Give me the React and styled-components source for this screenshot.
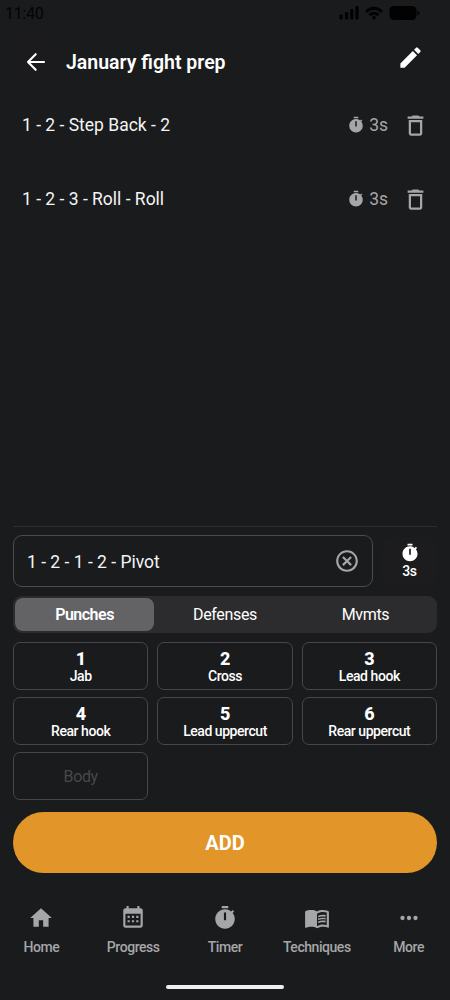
import React from 'react';
import styled, { createGlobalStyle } from 'styled-components';

const GlobalStyle = createGlobalStyle`
  * { box-sizing: border-box; }
  body { margin: 0; background: #1a1b1d; }
  button { font: inherit; color: inherit; padding: 0; border: 0; background: none; }
`;

const Screen = styled.div`
  width: 450px;
  height: 1000px;
  display: flex;
  flex-direction: column;
  overflow: hidden;
  background: #1a1b1d;
  color: #fff;
  font-family: Roboto, sans-serif;
`;

const Svg = styled.svg`
  display: block;
  flex: none;
  width: ${(p) => p.$size}px;
  height: ${(p) => p.$size}px;
  fill: currentColor;
`;

const paths = {
  edit: 'M3 17.25V21h3.75L17.81 9.94l-3.75-3.75L3 17.25zM20.71 7.04a1 1 0 0 0 0-1.41l-2.34-2.34a1 1 0 0 0-1.41 0l-1.83 1.83 3.75 3.75 1.83-1.83z',
  timer: 'M19.03 7.39L20.45 5.97C20 5.46 19.55 5 19.04 4.56L17.62 6C16.07 4.74 14.12 4 12 4C7.03 4 3 8.03 3 13S7.03 22 12 22C17 22 21 17.97 21 13C21 10.88 20.26 8.93 19.03 7.39M13 14H11V7H13V14M15 1H9V3H15V1Z',
  trash: 'M6 19c0 1.1.9 2 2 2h8c1.1 0 2-.9 2-2V7H6v12zM8 9h8v10H8V9zm7.5-5l-1-1h-5l-1 1H5v2h14V4z',
  clear: 'M12 20c-4.41 0-8-3.59-8-8s3.59-8 8-8 8 3.59 8 8-3.59 8-8 8m0-18C6.47 2 2 6.47 2 12s4.47 10 10 10 10-4.47 10-10S17.53 2 12 2m3.1 5.5L12 10.59 8.9 7.5 7.5 8.9 10.59 12 7.5 15.1 8.9 16.5 12 13.41 15.1 16.5 16.5 15.1 13.41 12 16.5 8.9z',
  home: 'M10,20V14H14V20H19V12H22L12,3L2,12H5V20H10Z',
  calendar: 'M9 10V12H7V10H9M13 10V12H11V10H13M17 10V12H15V10H17M19 3C20.11 3 21 3.9 21 5V19C21 20.1 20.11 21 19 21H5C3.89 21 3 20.1 3 19V5C3 3.9 3.9 3 5 3H6V1H8V3H16V1H18V3H19M19 19V8H5V19H19M9 14V16H7V14H9M13 14V16H11V14H13M17 14V16H15V14H17Z',
  book: 'M21 5c-1.11-.35-2.33-.5-3.5-.5-1.95 0-4.05.4-5.5 1.5-1.45-1.1-3.55-1.5-5.5-1.5S2.45 4.9 1 6v14.65c0 .25.25.5.5.5.1 0 .15-.05.25-.05C3.1 20.45 5.05 20 6.5 20c1.95 0 4.05.4 5.5 1.5 1.35-.85 3.8-1.5 5.5-1.5 1.65 0 3.35.3 4.75 1.05.1.05.15.05.25.05.25 0 .5-.25.5-.5V6c-.6-.45-1.25-.75-2-1zm0 13.5c-1.1-.35-2.3-.5-3.5-.5-1.7 0-4.15.65-5.5 1.5V8c1.35-.85 3.8-1.5 5.5-1.5 1.2 0 2.4.15 3.5.5v11.5zM17.5 10.5c.88 0 1.73.09 2.5.26V9.24c-.79-.15-1.64-.24-2.5-.24-1.7 0-3.24.29-4.5.83v1.66c1.13-.64 2.7-.99 4.5-.99zM13 12.49v1.66c1.13-.64 2.7-.99 4.5-.99.88 0 1.73.09 2.5.26V11.9c-.79-.15-1.64-.24-2.5-.24-1.7 0-3.24.3-4.5.83zM17.5 14.33c-1.7 0-3.24.29-4.5.83v1.66c1.13-.64 2.7-.99 4.5-.99.88 0 1.73.09 2.5.26v-1.52c-.79-.16-1.64-.24-2.5-.24z',
  more: 'M16,12A2,2 0 0,1 18,10A2,2 0 0,1 20,12A2,2 0 0,1 18,14A2,2 0 0,1 16,12M10,12A2,2 0 0,1 12,10A2,2 0 0,1 14,12A2,2 0 0,1 12,14A2,2 0 0,1 10,12M4,12A2,2 0 0,1 6,10A2,2 0 0,1 8,12A2,2 0 0,1 6,14A2,2 0 0,1 4,12Z',
};

const Icon = ({ name, size }) => (
  <Svg $size={size} viewBox="0 0 24 24"><path d={paths[name]} /></Svg>
);

const StatusBar = styled.div`
  height: 26px;
  flex: none;
  display: flex;
  justify-content: space-between;
  align-items: center;
  padding: 0 30px 0 5px;
  color: #040405;
  font-size: 16px;
  letter-spacing: -0.3px;
`;

const StatusIcons = styled.svg`
  width: 82px;
  height: 16px;
  fill: #020203;
`;

const Header = styled.header`
  height: 62px;
  flex: none;
  display: flex;
  align-items: center;
  padding: 9px 26px 0 12px;
`;

const BackButton = styled.button`
  width: 48px;
  height: 48px;
  border-radius: 16px;
  background: #1b1b1d;
  display: grid;
  place-items: center;
`;

const BackArrow = styled.svg`
  width: 20px;
  height: 20px;
  fill: none;
  stroke: #fff;
  stroke-width: 2.1;
  stroke-linecap: round;
  stroke-linejoin: round;
`;

const Title = styled.h1`
  margin: 0 0 0 6px;
  padding-top: 2px;
  flex: 1;
  font-size: 19.5px;
  line-height: 24px;
  font-weight: 600;
`;

const EditButton = styled.button`
  height: 36px;
  display: flex;
  align-items: flex-start;
`;

const ComboList = styled.div`
  flex: 1;
`;

const ComboRow = styled.div`
  height: 74px;
  display: flex;
  align-items: center;
  padding: 0 21px 0 22px;
  font-size: 17.5px;
  line-height: 22px;
`;

const ComboName = styled.span`
  flex: 1;
  color: #f4f4f5;
`;

const Duration = styled.span`
  display: flex;
  align-items: center;
  gap: 4px;
  margin-right: 14px;
  color: #a5a6a8;
`;

const DeleteButton = styled.button`
  color: #a5a6a8;
`;

const Editor = styled.section`
  flex: none;
  margin: 0 13px;
  padding-top: 8px;
  border-top: 1px solid #2d2d31;
`;

const EntryRow = styled.div`
  display: flex;
  align-items: center;
  gap: 9px;
`;

const Entry = styled.div`
  width: 360px;
  height: 52px;
  display: flex;
  align-items: center;
  justify-content: space-between;
  padding: 0 12px 0 13px;
  border: 1px solid #4a4a51;
  border-radius: 9px;
  font-size: 17.5px;
  line-height: 22px;
  color: #f4f4f5;
`;

const EntryText = styled.span`
  padding-top: 1px;
`;

const ClearButton = styled.button`
  color: #a5a6a8;
`;

const TimeButton = styled.button`
  flex: 1;
  height: 49px;
  display: flex;
  flex-direction: column;
  align-items: center;
  justify-content: center;
  border-radius: 9px;
  background: #1c1c1e;
  font-size: 14px;
  letter-spacing: -0.4px;
  line-height: 16px;
  font-weight: 500;
`;

const Segments = styled.div`
  height: 37px;
  margin-top: 9px;
  padding: 2px;
  display: grid;
  grid-template-columns: 139px 1fr 139px;
  border-radius: 9px;
  background: #2c2c2e;
`;

const Segment = styled.button`
  border-radius: 8px;
  background: ${(p) => (p.$active ? '#636366' : 'transparent')};
  font-size: 16px;
  letter-spacing: ${(p) => (p.$active ? '-0.5px' : '-0.35px')};
  line-height: 20px;
  font-weight: ${(p) => (p.$active ? 600 : 400)};
`;

const Pad = styled.div`
  margin-top: 9px;
  display: grid;
  grid-template-columns: repeat(3, 1fr);
  grid-auto-rows: 48px;
  gap: 7px 9px;
`;

const Key = styled.button`
  display: flex;
  flex-direction: column;
  align-items: center;
  justify-content: center;
  padding-top: 2px;
  border: 1px solid #46464b;
  border-radius: 7px;
  font-size: 14px;
  letter-spacing: -0.45px;
  line-height: 17px;
  font-weight: 500;
`;

const KeyNumber = styled.span`
  font-size: 18px;
  line-height: 19px;
  font-weight: 800;
`;

const DisabledLabel = styled.span`
  margin-top: -2px;
  font-size: 16px;
  letter-spacing: -0.4px;
  font-weight: 400;
  color: #48494b;
`;

const AddButton = styled.button`
  display: block;
  width: 100%;
  height: 61px;
  margin-top: 12px;
  border-radius: 31px;
  background: #e29528;
  font-size: 20px;
  line-height: 24px;
  font-weight: 700;
`;

const TabBar = styled.nav`
  height: 127px;
  flex: none;
  display: flex;
  justify-content: center;
  padding-top: 32px;
`;

const Tab = styled.button`
  width: 91.8px;
  flex: none;
  display: flex;
  flex-direction: column;
  align-items: center;
  justify-content: flex-start;
  gap: 8px;
  color: #a5a6a8;
  font-size: 14px;
  letter-spacing: -0.45px;
  line-height: 17px;
  font-weight: 500;
`;

const HomeIndicator = styled.div`
  position: absolute;
  left: 166px;
  top: 985px;
  width: 118px;
  height: 4px;
  border-radius: 2px;
  background: #eeeff2;
`;

const combos = ['1 - 2 - Step Back - 2', '1 - 2 - 3 - Roll - Roll'];
const punches = ['Jab', 'Cross', 'Lead hook', 'Rear hook', 'Lead uppercut', 'Rear uppercut'];
const tabs = [['home', 'Home'], ['calendar', 'Progress'], ['timer', 'Timer'], ['book', 'Techniques'], ['more', 'More']];

export default function App() {
  return (
    <Screen>
      <GlobalStyle />
      <StatusBar>
        <span>11:40</span>
        <StatusIcons viewBox="0 0 82 16">
          <rect x="1.5" y="9.5" width="3.2" height="5" rx="1" />
          <rect x="7" y="7" width="3.2" height="7.5" rx="1" />
          <rect x="12.2" y="4" width="3.2" height="10.5" rx="1" />
          <rect x="17.4" y="1" width="3.2" height="13.5" rx="1" />
          <path d="M27 5.7Q36 -2.3 45 5.7L43 7.8Q36 1.8 29 7.8ZM30.4 9.1Q36 4.3 41.6 9.1L39.6 11.2Q36 8.2 32.4 11.2Z" />
          <circle cx="36" cy="12.8" r="1.8" />
          <rect x="51.5" y="1" width="27" height="14" rx="4.5" />
          <path d="M79.5 5.5q2 .6 2 2.5t-2 2.5z" />
        </StatusIcons>
      </StatusBar>
      <Header>
        <BackButton aria-label="Back">
          <BackArrow viewBox="0 0 20 20"><path d="M18 10H2M9.7 2.2 2 10l7.7 7.8" /></BackArrow>
        </BackButton>
        <Title>January fight prep</Title>
        <EditButton aria-label="Edit"><Icon name="edit" size={27} /></EditButton>
      </Header>
      <ComboList>
        {combos.map((name) => (
          <ComboRow key={name}>
            <ComboName>{name}</ComboName>
            <Duration><Icon name="timer" size={18} />3s</Duration>
            <DeleteButton aria-label="Delete"><Icon name="trash" size={27} /></DeleteButton>
          </ComboRow>
        ))}
      </ComboList>
      <Editor>
        <EntryRow>
          <Entry>
            <EntryText>1 - 2 - 1 - 2 - Pivot</EntryText>
            <ClearButton aria-label="Clear"><Icon name="clear" size={26} /></ClearButton>
          </Entry>
          <TimeButton><Icon name="timer" size={20} />3s</TimeButton>
        </EntryRow>
        <Segments>
          <Segment $active>Punches</Segment>
          <Segment>Defenses</Segment>
          <Segment>Mvmts</Segment>
        </Segments>
        <Pad>
          {punches.map((label, i) => (
            <Key key={label}><KeyNumber>{i + 1}</KeyNumber>{label}</Key>
          ))}
          <Key disabled><DisabledLabel>Body</DisabledLabel></Key>
        </Pad>
        <AddButton>ADD</AddButton>
      </Editor>
      <TabBar>
        {tabs.map(([icon, label]) => (
          <Tab key={label}><Icon name={icon} size={26} />{label}</Tab>
        ))}
      </TabBar>
      <HomeIndicator />
    </Screen>
  );
}
